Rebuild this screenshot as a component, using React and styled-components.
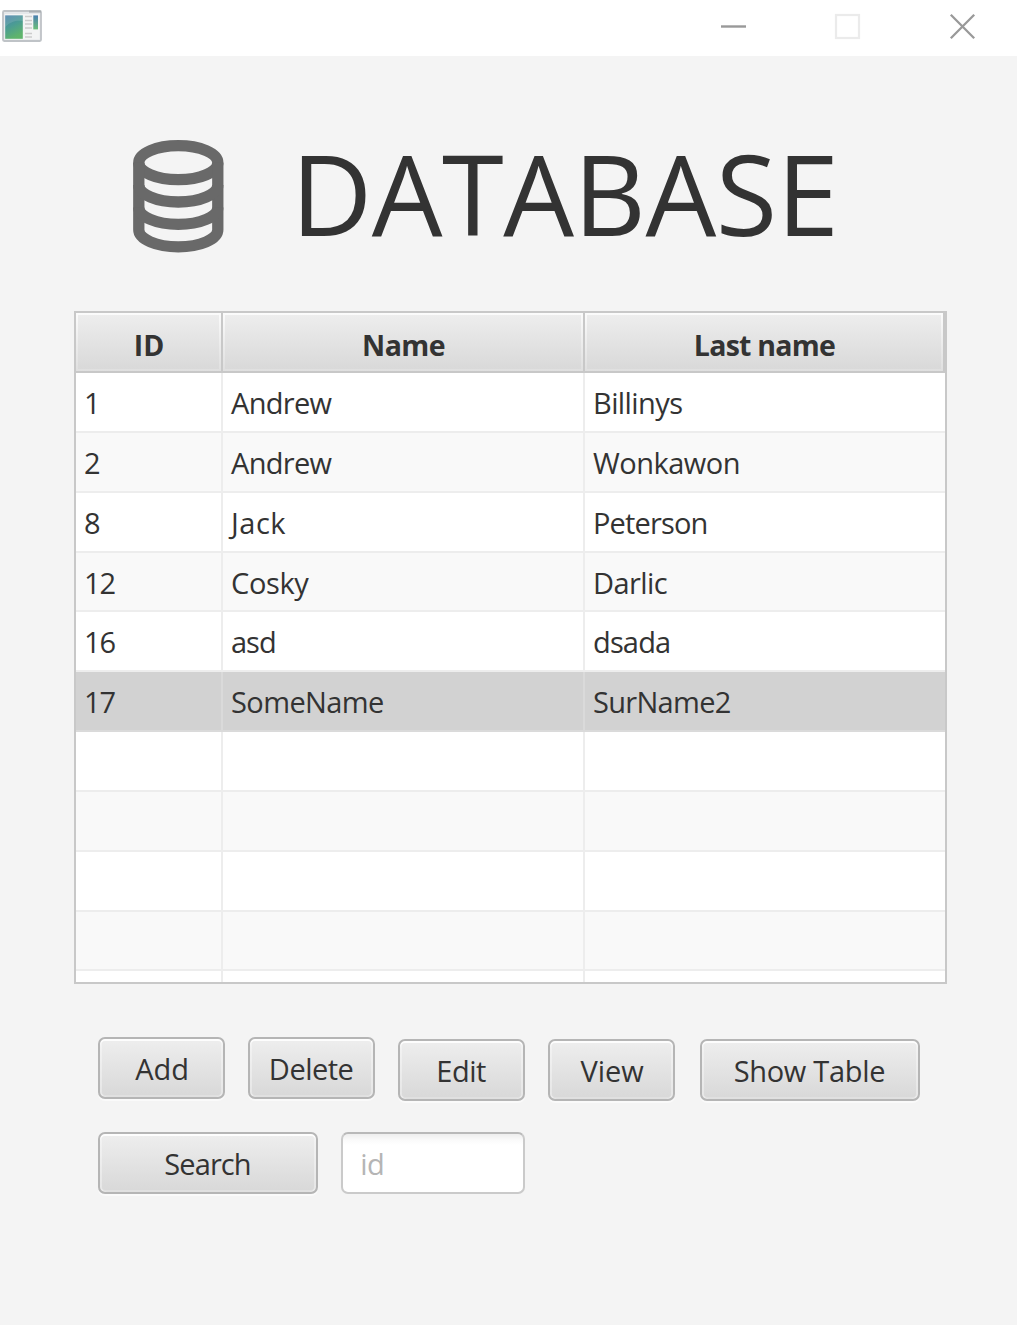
import React from "react";
import styled, { createGlobalStyle } from "styled-components";

const GlobalStyle = createGlobalStyle`
  * { box-sizing: border-box; }
  body {
    margin: 0;
    background: #f4f4f4;
    color: #333333;
    font-family: "Open Sans", "Noto Sans", sans-serif;
    font-size: 29px;
  }
`;

const Window = styled.div`
  display: flex;
  flex-direction: column;
  width: 1017px;
  height: 1325px;
  overflow: hidden;
  background: #f4f4f4;
`;

const TitleBar = styled.header`
  display: flex;
  align-items: flex-start;
  justify-content: space-between;
  flex: none;
  height: 56.4px;
  padding: 9px 41px 0 1px;
  background: #ffffff;
`;

const WindowControls = styled.div`
  display: flex;
  gap: 87.6px;
  padding-top: 4px;
`;

const Glyph = styled.svg`
  display: block;
  flex: none;
`;

const Heading = styled.div`
  display: flex;
  align-items: flex-start;
  flex: none;
  height: 254.6px;
  padding: 83.5px 0 0 133px;
`;

const Title = styled.h1`
  margin: -1.5px 0 0 67px;
  font-size: 112px;
  font-weight: 400;
  line-height: 110px;
  letter-spacing: ${(p) => p.$track}px;
  white-space: nowrap;
`;

const Table = styled.div`
  display: flex;
  flex-direction: column;
  flex: none;
  width: 873px;
  height: 673px;
  margin-left: 74px;
  border: 2px solid #c8c8c8;
  background: #ffffff;
  overflow: hidden;
`;

const columns = "147px 362px 360px";

const HeaderRow = styled.div`
  display: grid;
  grid-template-columns: ${columns};
  flex: none;
  height: 60px;
  background: #c8c8c8;
  border-bottom: 2px solid #c8c8c8;
`;

const HeaderCell = styled.div`
  display: flex;
  align-items: center;
  justify-content: center;
  margin-right: 2px;
  padding: 7px 0 0 1px;
  font-weight: 700;
  font-size: 28.5px;
  letter-spacing: ${(p) => p.$track || 0}px;
  border: 2px solid transparent;
  background:
    linear-gradient(#ededed, #d9d9d9) padding-box,
    linear-gradient(#fbfbfb, #dfdfdf) border-box;
`;

const Row = styled.div`
  display: grid;
  grid-template-columns: ${columns};
  flex: none;
  height: 59.85px;
  --line: ${(p) => (p.$selected ? "#dadada" : "#ededed")};
  background: ${(p) => (p.$selected ? "#d2d2d2" : p.$odd ? "#f9f9f9" : "#ffffff")};
  border-bottom: 2px solid var(--line);
`;

const Cell = styled.div`
  display: flex;
  align-items: center;
  padding: 1.2px 0 0 8px;
  letter-spacing: ${(p) => p.$track || 0}px;
  white-space: nowrap;
  border-right: ${(p) => (p.$last ? "none" : "2px solid var(--line)")};
`;

const Actions = styled.div`
  display: flex;
  flex-direction: column;
  gap: 30.5px;
  padding: 53px 0 0 98px;
`;

const ActionRow = styled.div`
  display: flex;
  align-items: flex-start;
  gap: 22.7px;
`;

const Button = styled.button`
  display: flex;
  align-items: center;
  justify-content: center;
  flex: none;
  width: ${(p) => (p.$wide ? 220 : 127.3)}px;
  height: 62px;
  margin: ${(p) => (p.$low ? 2.4 : 0)}px 0 0 ${(p) => p.$indent || 0}px;
  padding: 1px ${(p) => (p.$track ? 1 : 0)}px 0 ${(p) => (p.$track ? 0 : 1)}px;
  border: 2px solid #b5b5b5;
  border-radius: 7px;
  color: #333333;
  font: inherit;
  letter-spacing: ${(p) => p.$track || 0}px;
  white-space: nowrap;
  background: linear-gradient(#eeeeee, #d8d8d8);
  box-shadow:
    0 2px 0 #fafafa,
    inset 0 2px 0 #fdfdfd,
    inset 2px 0 0 rgba(255, 255, 255, 0.35),
    inset -2px 0 0 rgba(255, 255, 255, 0.35),
    inset 0 -2px 0 #e0e0e0;
`;

const Field = styled.input`
  width: 184.5px;
  height: 62px;
  padding: 1px 18px 0 17.5px;
  border: 2px solid #cacaca;
  border-top-color: #b9b9b9;
  border-radius: 7px;
  outline: none;
  font: inherit;
  letter-spacing: -0.5px;
  color: #333333;
  background: linear-gradient(#eeeeee 0, #fafafa 6px, #ffffff 11px);
  &::placeholder { color: #b5b5b5; opacity: 1; }
`;

const rows = [
  { id: "1", name: "Andrew", last: "Billinys", track: [0, -0.7, -0.6] },
  { id: "2", name: "Andrew", last: "Wonkawon", track: [0, -0.7, -0.5] },
  { id: "8", name: "Jack", last: "Peterson", track: [0, 0.5, -0.85] },
  { id: "12", name: "Cosky", last: "Darlic", track: [-1, -0.35, -0.6] },
  { id: "16", name: "asd", last: "dsada", track: [-1, -1, -0.85] },
  { id: "17", name: "SomeName", last: "SurName2", track: [-1, -0.6, -0.7] },
  {},
  {},
  {},
  {},
  {},
];

function AppIcon() {
  return (
    <Glyph width="42" height="34" viewBox="0 0 42 34">
      <defs>
        <linearGradient id="pane" x1="0" y1="0" x2="0.4" y2="1">
          <stop offset="0" stopColor="#4a80ac" />
          <stop offset="0.5" stopColor="#4b9c94" />
          <stop offset="1" stopColor="#5fb46c" />
        </linearGradient>
        <linearGradient id="bar" x1="0" y1="0" x2="0" y2="1">
          <stop offset="0" stopColor="#4a7fb0" />
          <stop offset="1" stopColor="#6abf78" />
        </linearGradient>
      </defs>
      <rect x="2" y="2" width="38" height="30" rx="1.2" fill="#e4e7ea" stroke="#bfc3c7" strokeWidth="1.8" />
      <rect x="28" y="1.6" width="12" height="2" fill="#a9aeb2" />
      <rect x="3.6" y="5" width="35" height="25.5" fill="#f3f4f4" />
      <rect x="4.2" y="6.4" width="17.6" height="23.4" fill="url(#pane)" />
      <path d="M4.2 18C10 12 16 11 22 12V6.4H4.2Z" fill="#ffffff" opacity="0.12" />
      <path d="M24 7.5h7M24 11.5h7M24 15h7M24 19h7M24 24.5h7M24 28h7" stroke="#cccccc" strokeWidth="1.4" />
      <rect x="32.3" y="6.4" width="4.7" height="14" fill="url(#bar)" />
    </Glyph>
  );
}

function DatabaseIcon() {
  return (
    <Glyph width="91" height="113" viewBox="0 0 91 113" fill="none" stroke="#696969" strokeWidth="11.3">
      <ellipse cx="45.3" cy="22.7" rx="39.5" ry="17" />
      <path d="M5.8 22.7V89.8A39.5 17 0 0 0 84.8 89.8V22.7" />
      <path d="M5.8 45A39.5 17 0 0 0 84.8 45" />
      <path d="M5.8 67.4A39.5 17 0 0 0 84.8 67.4" />
    </Glyph>
  );
}

export default function App() {
  return (
    <Window>
      <GlobalStyle />
      <TitleBar>
        <AppIcon />
        <WindowControls>
          <Glyph width="27" height="27" viewBox="0 0 27 27">
            <path d="M1 13.5H26" stroke="#999999" strokeWidth="2.4" />
          </Glyph>
          <Glyph width="27" height="27" viewBox="0 0 27 27">
            <rect x="2" y="2" width="23" height="23" fill="none" stroke="#ebebeb" strokeWidth="2.2" />
          </Glyph>
          <Glyph width="27" height="27" viewBox="0 0 27 27">
            <path d="M1.8 1.8L25.2 25.2M25.2 1.8L1.8 25.2" stroke="#999999" strokeWidth="2.3" />
          </Glyph>
        </WindowControls>
      </TitleBar>
      <Heading>
        <DatabaseIcon />
        <Title $track={-0.5}>DATABASE</Title>
      </Heading>
      <Table>
        <HeaderRow>
          <HeaderCell>ID</HeaderCell>
          <HeaderCell $track={-0.6}>Name</HeaderCell>
          <HeaderCell $track={-0.75}>Last name</HeaderCell>
        </HeaderRow>
        {rows.map(({ id, name, last, track = [] }, i) => (
          <Row key={i} $odd={i % 2 === 1} $selected={id === "17"}>
            <Cell $track={track[0]}>{id}</Cell>
            <Cell $track={track[1]}>{name}</Cell>
            <Cell $track={track[2]} $last>{last}</Cell>
          </Row>
        ))}
      </Table>
      <Actions>
        <ActionRow>
          <Button>Add</Button>
          <Button $track={-0.5}>Delete</Button>
          <Button $low $track={-0.5}>Edit</Button>
          <Button $low>View</Button>
          <Button $low $wide $indent={2} $track={-0.3}>Show Table</Button>
        </ActionRow>
        <ActionRow>
          <Button $wide $track={-0.9}>Search</Button>
          <Field placeholder="id" />
        </ActionRow>
      </Actions>
    </Window>
  );
}
